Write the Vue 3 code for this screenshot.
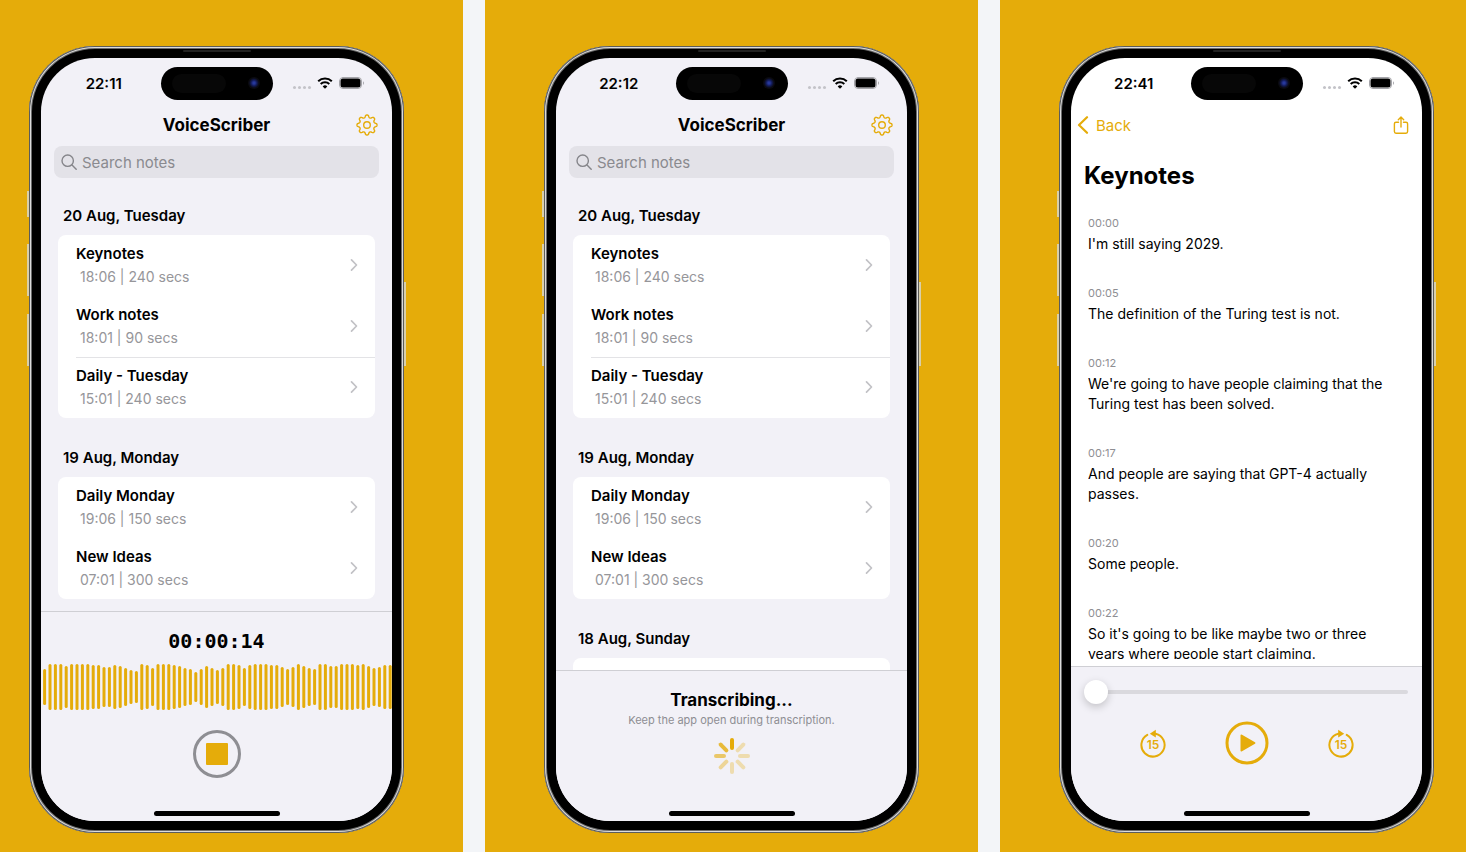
<template>
  <main class="gallery">
    <section v-for="shot in shots" :key="shot.id" class="slide">
      <div class="phone">
        <span class="side-key mute"></span>
        <span class="side-key volume-up"></span>
        <span class="side-key volume-down"></span>
        <span class="side-key power"></span>
        <span class="speaker"></span>

        <div class="screen" :class="{ plain: shot.id === 'player' }">
          <!-- status bar -->
          <div class="status-bar">
            <span class="clock">{{ shot.clock }}</span>
            <span class="island"><span class="sensor"></span><span class="lens"></span></span>
            <span class="indicators">
              <span class="signal"><i></i><i></i><i></i><i></i></span>
              <svg class="wifi" viewBox="0 0 16 12">
                <path d="M1.2 4.3a9.7 9.7 0 0 1 13.6 0" />
                <path d="M3.7 7a6.1 6.1 0 0 1 8.6 0" />
                <path class="wifi-dot" d="M8 11.8 5.7 9.4a3.3 3.3 0 0 1 4.6 0z" />
              </svg>
              <svg class="battery" viewBox="0 0 26 12">
                <rect class="shell" x="0.5" y="0.5" width="22" height="11" rx="3.5" />
                <rect x="1.500" y="1.500" width="20" height="9" rx="2.5" />
                <path class="nub" d="M24 4.2c1.3.4 1.3 3.2 0 3.6z" />
              </svg>
            </span>
          </div>

          <!-- notes list -->
          <template v-if="shot.id !== 'player'">
            <header class="nav">
              <h1>VoiceScriber</h1>
              <button class="icon-button settings" aria-label="Settings">
                <svg viewBox="0 0 22 22">
                  <path :d="gearPath" />
                  <circle cx="11" cy="11" r="3.3" />
                </svg>
              </button>
            </header>

            <label class="search">
              <svg viewBox="0 0 16 16">
                <circle cx="6.7" cy="6.7" r="5.7" />
                <path d="M11 11l4.2 4.2" />
              </svg>
              <input v-model="query" type="text" placeholder="Search notes" aria-label="Search notes" />
            </label>

            <div class="notes">
              <section v-for="group in groups.slice(0, shot.groups)" :key="group.date">
                <h2>{{ group.date }}</h2>
                <div class="card">
                  <a
                    v-for="note in group.notes"
                    :key="note.name"
                    href="#"
                    class="note"
                    :class="{ divided: note.divided }"
                  >
                    <span class="note-text">
                      <strong>{{ note.name }}</strong>
                      <small>{{ note.time }} | {{ note.secs }} secs</small>
                    </span>
                    <svg class="chevron" viewBox="0 0 8 14"><path d="M1.5 1.8 6.5 7l-5 5.2" /></svg>
                  </a>
                </div>
              </section>
            </div>
          </template>

          <!-- transcript -->
          <template v-else>
            <header class="nav nav-back">
              <a href="#" class="back">
                <svg viewBox="0 0 12 18"><path d="M10 1.2 2 9l8 7.8" /></svg>
                Back
              </a>
              <button class="icon-button share" aria-label="Share">
                <svg viewBox="0 0 16 18">
                  <path d="M5.5 6.2H3A1.6 1.6 0 0 0 1.4 7.8v7.8A1.6 1.6 0 0 0 3 17.2h10a1.6 1.6 0 0 0 1.6-1.6V7.8A1.6 1.6 0 0 0 13 6.2h-2.5" />
                  <path d="M8 11V1.2M5.3 3.7 8 1.1l2.7 2.6" />
                </svg>
              </button>
            </header>
            <h1 class="title">Keynotes</h1>
            <div class="transcript">
              <div v-for="line in transcript" :key="line.at" class="line">
                <time>{{ line.at }}</time>
                <p>{{ line.text }}</p>
              </div>
            </div>
          </template>

          <!-- bottom panel -->
          <footer class="panel" :class="shot.id">
            <template v-if="shot.id === 'recording'">
              <div class="timer">00:00:14</div>
              <svg class="wave" viewBox="0 0 351 46">
                <line
                  v-for="bar in bars"
                  :key="bar.x"
                  :x1="bar.x"
                  :x2="bar.x"
                  :y1="bar.inset + 1.5"
                  :y2="44.5 - bar.inset"
                />
              </svg>
              <button class="stop" aria-label="Stop recording"><span></span></button>
            </template>

            <template v-else-if="shot.id === 'transcribing'">
              <h3>Transcribing...</h3>
              <p class="hint">Keep the app open during transcription.</p>
              <svg class="spinner" viewBox="-18 -18 36 36">
                <line
                  v-for="(opacity, i) in spokes"
                  :key="i"
                  y1="-16"
                  y2="-8"
                  :opacity="opacity"
                  :transform="`rotate(${i * 45})`"
                />
              </svg>
            </template>

            <template v-else>
              <input v-model="position" class="seek" type="range" min="0" max="240" aria-label="Position" />
              <div class="controls">
                <button class="icon-button skip" aria-label="Back 15 seconds">
                  <svg viewBox="0 0 28 30">
                    <path class="ring" d="M8.3 6.9A11.6 11.6 0 1 0 16.6 5.7" />
                    <path class="arrow" d="M10.8 5.7 16.8 1.8v7.8z" />
                    <text x="14" y="21">15</text>
                  </svg>
                </button>
                <button class="icon-button play" aria-label="Play">
                  <svg viewBox="0 0 44 44">
                    <circle cx="22" cy="22" r="20" />
                    <path d="M15.5 14.5v15a1 1 0 0 0 1.5.8l13-7.5a1 1 0 0 0 0-1.6l-13-7.500a1 1 0 0 0-1.500.8z" />
                  </svg>
                </button>
                <button class="icon-button skip" aria-label="Forward 15 seconds">
                  <svg viewBox="0 0 28 30">
                    <path class="ring" d="M19.7 6.9A11.6 11.6 0 1 1 11.4 5.7" />
                    <path class="arrow" d="M17.2 5.7 11.2 1.8v7.8z" />
                    <text x="14" y="21">15</text>
                  </svg>
                </button>
              </div>
            </template>
            <span class="home-bar"></span>
          </footer>
        </div>
      </div>
    </section>
  </main>
</template>

<script setup>
import { ref } from 'vue'

const query = ref('')
const position = ref(0)

// groups: number of days that fit above the bottom panel
const shots = [
  { id: 'recording', clock: '22:11', groups: 2 },
  { id: 'transcribing', clock: '22:12', groups: 3 },
  { id: 'player', clock: '22:41' }
]

const groups = [
  {
    date: '20 Aug, Tuesday',
    notes: [
      { name: 'Keynotes', time: '18:06', secs: 240 },
      { name: 'Work notes', time: '18:01', secs: 90 },
      { name: 'Daily - Tuesday', time: '15:01', secs: 240, divided: true }
    ]
  },
  {
    date: '19 Aug, Monday',
    notes: [
      { name: 'Daily Monday', time: '19:06', secs: 150 },
      { name: 'New Ideas', time: '07:01', secs: 300 }
    ]
  },
  {
    date: '18 Aug, Sunday',
    notes: []
  }
]

const transcript = [
  { at: '00:00', text: "I'm still saying 2029." },
  { at: '00:05', text: 'The definition of the Turing test is not.' },
  { at: '00:12', text: "We're going to have people claiming that the Turing test has been solved." },
  { at: '00:17', text: 'And people are saying that GPT-4 actually passes.' },
  { at: '00:20', text: 'Some people.' },
  { at: '00:22', text: "So it's going to be like maybe two or three years where people start claiming." }
]

// how far each bar falls short of full height, top and bottom
const insets = [
  5, 0, 0, 0, 2, 0, 0, 0, 0, 1, 1, 3, 3, 1, 2, 4, 6, 7, 0, 1, 4, 0, 0, 0, 1, 2, 4, 5, 8, 5, 2, 4, 6,
  4, 0, 0, 1, 4, 1, 0, 0, 0, 1, 1, 3, 5, 3, 0, 2, 4, 5, 0, 0, 2, 2, 0, 0, 0, 1, 0, 2, 4, 3, 1, 1
]
const bars = insets.map((inset, i) => ({ x: 3.6 + i * 5.4, inset }))

// clockwise from the top
const spokes = [1, 0.3, 0.3, 0.3, 0.3, 0.4, 0.6, 0.8]

// eight-toothed gear outline
const gearPath = gear(8)

function gear(teeth) {
  const points = []
  for (let i = 0; i < 160; i++) {
    const angle = (i / 160) * Math.PI * 2
    const r = 8.8 + 1.2 * (Math.tanh(1.5 * Math.cos(angle * teeth)) / Math.tanh(1.5))
    points.push(`${(11 + r * Math.sin(angle)).toFixed(2)} ${(11 - r * Math.cos(angle)).toFixed(2)}`)
  }
  return `M${points.join('L')}Z`
}
</script>

<style>
body {
  margin: 0;
  background: #f3f5f8;
}
</style>

<style scoped>
.gallery {
  --amber: #e5ac0a;
  --gray: #8e8e93;
  display: flex;
  justify-content: center;
  gap: 22px;
  min-height: 100vh;
  padding-right: 3px;
  overflow: hidden;
  box-sizing: border-box;
  font-family: Inter, "Liberation Sans", sans-serif;
  color: #000;
}

.slide {
  flex: 0 0 calc((100vw + 13px) / 3);
  display: flex;
  justify-content: center;
  align-items: flex-start;
  padding: 46px 0 19px;
  box-sizing: border-box;
  background: var(--amber);
}

h1,
h2,
h3,
p {
  margin: 0;
}

a {
  color: inherit;
  text-decoration: none;
}

svg {
  display: block;
  fill: none;
  stroke-linecap: round;
  stroke-linejoin: round;
}

.icon-button {
  padding: 0;
  border: none;
  background: none;
  cursor: pointer;
}

/* phone body */
.phone {
  position: relative;
  flex: none;
  width: 375px;
  aspect-ratio: 375 / 787;
  padding: 12px;
  box-sizing: border-box;
  border-radius: 66px;
  background: #000;
  box-shadow: inset 0 0 0 1px #5c5c5a, inset 0 0 0 2px #dcdcdc, inset 0 0 0 3px #6c6c6c;
}

.side-key {
  position: absolute;
  left: -2px;
  width: 2px;
  background: #d9cfaa;
}

.mute {
  top: 145px;
  height: 26px;
}

.volume-up {
  top: 198px;
  height: 52px;
}

.volume-down {
  top: 268px;
  height: 52px;
}

.power {
  top: 236px;
  left: auto;
  right: -2px;
  height: 84px;
}

.speaker {
  position: absolute;
  top: 4px;
  left: 50%;
  width: 68px;
  height: 2px;
  margin-left: -34px;
  border-radius: 1px;
  background: #222;
}

.screen {
  display: flex;
  flex-direction: column;
  height: 100%;
  overflow: hidden;
  border-radius: 54px;
  background: #f2f1f7;
}

.screen.plain {
  background: #fff;
}

/* status bar */
.status-bar {
  display: grid;
  grid-template-columns: 1fr 112px 1fr;
  align-items: center;
  flex: none;
  height: 50px;
}

.clock {
  padding-left: 6px;
  text-align: center;
  font-size: 15px;
  font-weight: 600;
}

.island {
  display: flex;
  align-items: center;
  justify-content: space-between;
  height: 33px;
  padding: 0 13px 0 11px;
  box-sizing: border-box;
  border-radius: 17px;
  background: #000;
}

.sensor {
  width: 54px;
  height: 19px;
  border-radius: 10px;
  background: #070707;
}

.lens {
  width: 12px;
  height: 12px;
  border-radius: 50%;
  background: radial-gradient(circle, #27389c 0 1px, #121a55 3px, #0a0a10 5px);
}

.indicators {
  display: flex;
  align-items: center;
  gap: 6px;
  padding-left: 20px;
}

.signal {
  display: flex;
  gap: 2px;
  padding-top: 8px;
}

.signal i {
  width: 3px;
  height: 3px;
  border-radius: 50%;
  background: #c3c3c8;
}

.wifi {
  width: 16px;
  height: 12px;
  stroke: #000;
  stroke-width: 2;
  stroke-linecap: butt;
}

.wifi-dot {
  fill: #000;
  stroke: none;
}

.battery {
  width: 26px;
  height: 12px;
  fill: #000;
}

.battery .shell {
  fill: none;
  stroke: #a5a5aa;
}

.battery .nub {
  fill: #a5a5aa;
}

/* navigation */
.nav {
  display: grid;
  grid-template-columns: 1fr auto 1fr;
  align-items: center;
  flex: none;
  height: 34px;
  padding: 0 14px;
}

.nav h1 {
  grid-column: 2;
  font-size: 17px;
  line-height: 24px;
  font-weight: 700;
}

.settings {
  justify-self: end;
}

.settings svg {
  width: 22px;
  height: 22px;
  stroke: var(--amber);
  stroke-width: 1.4;
}

.nav-back {
  display: flex;
  justify-content: space-between;
  padding: 0 13px 0 6px;
}

.back {
  display: flex;
  align-items: center;
  gap: 7px;
  color: var(--amber);
  font-size: 15px;
}

.back svg {
  width: 12px;
  height: 18px;
  stroke: currentColor;
  stroke-width: 2.2;
}

.share svg {
  width: 16px;
  height: 18px;
  stroke: var(--amber);
  stroke-width: 1.4;
}

.search {
  display: flex;
  align-items: center;
  gap: 5px;
  flex: none;
  height: 32px;
  margin: 4px 13px 0;
  padding: 0 7px;
  box-sizing: border-box;
  border-radius: 8px;
  background: #e3e2e8;
}

.search svg {
  flex: none;
  width: 16px;
  height: 16px;
  stroke: #85858a;
  stroke-width: 1.4;
}

.search input {
  flex: 1;
  min-width: 0;
  padding: 0;
  border: none;
  outline: none;
  background: none;
  font: inherit;
  font-size: 15px;
}

.search input::placeholder {
  color: #8a8a8f;
  opacity: 1;
}

/* notes */
.notes {
  display: flex;
  flex-direction: column;
  gap: 2px;
  flex: 1;
  min-height: 0;
  padding: 0 17px;
  overflow: hidden;
}

.notes h2 {
  padding: 28px 5px 9px;
  font-size: 15px;
  line-height: 20px;
  font-weight: 600;
}

.card {
  min-height: 61px;
  overflow: hidden;
  border-radius: 8px;
  background: #fff;
}

.note {
  display: flex;
  align-items: center;
  justify-content: space-between;
  position: relative;
  height: 61px;
  padding: 0 17px 2px 18px;
  box-sizing: border-box;
}

.note.divided::before {
  content: "";
  position: absolute;
  top: 0;
  left: 18px;
  right: 0;
  height: 1px;
  background: #e3e3e6;
}

.note-text {
  display: flex;
  flex-direction: column;
}

.note strong {
  font-size: 15px;
  line-height: 23px;
  font-weight: 600;
}

.note small {
  padding-left: 4px;
  color: #96969a;
  font-size: 14px;
  line-height: 23px;
}

.chevron {
  width: 8px;
  height: 14px;
  stroke: #c2c2c6;
  stroke-width: 1.7;
}

/* transcript */
.title {
  flex: none;
  padding: 18px 13px 0;
  font-size: 24px;
  line-height: 32px;
  font-weight: 700;
}

.transcript {
  flex: 1;
  min-height: 0;
  margin: 21px 25px 7px 17px;
  overflow: hidden;
}

.line {
  margin-bottom: 29px;
}

.line time {
  display: block;
  margin-bottom: 1px;
  color: var(--gray);
  font-size: 11px;
  line-height: 20px;
}

.line p {
  font-size: 14px;
  line-height: 20px;
}

/* bottom panel */
.panel {
  display: flex;
  flex-direction: column;
  align-items: center;
  flex: none;
  padding-bottom: 5px;
  box-sizing: border-box;
  border-top: 1px solid #cfcfd4;
  background: #f2f1f7;
}

.home-bar {
  width: 126px;
  height: 5px;
  margin-top: auto;
  border-radius: 3px;
  background: #000;
}

.recording {
  height: 210px;
}

.timer {
  padding-top: 17px;
  font-family: "DejaVu Sans Mono", "Liberation Mono", monospace;
  font-size: 20px;
  line-height: 24px;
  font-weight: 700;
}

.wave {
  width: 100%;
  margin-top: 11px;
  stroke: var(--amber);
  stroke-width: 3;
}

.stop {
  display: flex;
  align-items: center;
  justify-content: center;
  width: 48px;
  height: 48px;
  margin-top: 20px;
  padding: 0;
  border: 3px solid var(--gray);
  border-radius: 50%;
  background: none;
}

.stop span {
  width: 22px;
  height: 22px;
  border-radius: 1px;
  background: var(--amber);
}

.transcribing {
  height: 151px;
}

.transcribing h3 {
  padding-top: 17px;
  font-size: 17px;
  line-height: 24px;
  font-weight: 700;
}

.hint {
  color: var(--gray);
  font-size: 11px;
  line-height: 16px;
}

.spinner {
  width: 36px;
  height: 36px;
  margin-top: 10px;
  stroke: var(--amber);
  stroke-width: 4;
}

.player {
  height: 155px;
}

.seek {
  align-self: stretch;
  height: 24px;
  margin: 13px 14px 0 13px;
  appearance: none;
  background: none;
}

.seek::-webkit-slider-runnable-track {
  height: 4px;
  border-radius: 2px;
  background: #dad9de;
}

.seek::-webkit-slider-thumb {
  appearance: none;
  width: 24px;
  height: 24px;
  margin-top: -10px;
  border-radius: 50%;
  background: #fff;
  box-shadow: 0 3px 8px rgba(0, 0, 0, 0.2);
}

.controls {
  display: flex;
  align-items: center;
  gap: 58px;
  margin-top: 17px;
}

.skip svg {
  width: 28px;
  height: 30px;
}

.ring {
  stroke: var(--amber);
  stroke-width: 2;
}

.arrow {
  fill: var(--amber);
}

.skip text {
  fill: var(--amber);
  font-family: Inter, "Liberation Sans", sans-serif;
  font-size: 12px;
  font-weight: 600;
  text-anchor: middle;
}

.play svg {
  width: 44px;
  height: 44px;
}

.play circle {
  stroke: var(--amber);
  stroke-width: 3;
}

.play path {
  fill: var(--amber);
}
</style>
